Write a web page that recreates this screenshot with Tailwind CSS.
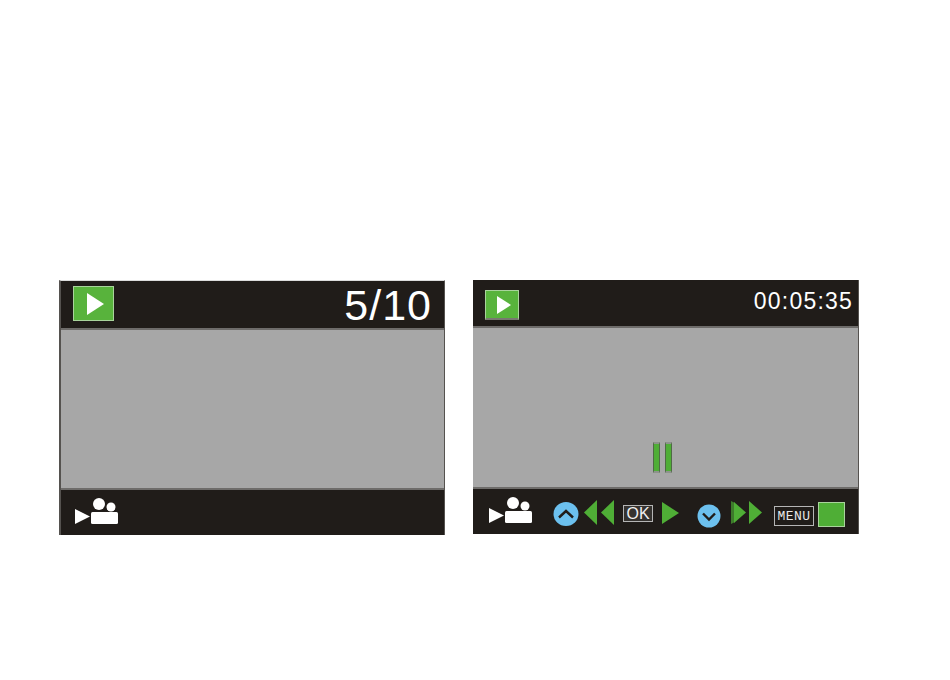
<!DOCTYPE html>
<html lang="en">
<head>
    <meta charset="UTF-8">
    <meta name="viewport" content="width=device-width, initial-scale=1.0">
    <script src="https://cdn.jsdelivr.net/npm/@tailwindcss/browser@4"></script>
    <title>Playback screens</title>
</head>
<body class="bg-white font-['Liberation_Sans',Arial,sans-serif]">
    <div class="w-[950px] h-[680px] flex items-start pl-[59px] pt-[280px] gap-[28px]">

        <!-- Photo playback -->
        <div class="w-[386px] h-[255px] flex flex-col bg-[#201c19] border-t border-t-[#dcdcdc] border-l-2 border-r border-l-[#55524f] border-r-[#55524f]">
            <div class="h-[49px] flex items-start justify-between pl-[12px] pr-[12px] shrink-0 border-b-2 border-[#6e6c6a]">
                <div class="w-[41px] h-[35px] mt-[5px] pl-[3px] flex items-center justify-center bg-[#58b33c] border border-[#a9d39c]">
                    <svg width="17" height="22" viewBox="0 0 17 22"><path d="M0 0L17 11L0 22Z" fill="#fff"/></svg>
                </div>
                <span class="text-[43px] leading-none tracking-[1px] text-white mt-[3px]">5/10</span>
            </div>
            <div class="h-[160px] bg-[#a7a7a7] shrink-0 border-b-2 border-[#6e6c6a]"></div>
            <div class="flex-1 flex items-start pl-[14px]">
                <svg class="mt-[8px]" width="44" height="27" viewBox="0 0 44 27">
                    <path d="M0 11L15 18.5L0 26Z" fill="#fff"/>
                    <circle cx="24" cy="6" r="6" fill="#fff"/>
                    <circle cx="36" cy="9" r="4.5" fill="#fff"/>
                    <rect x="16" y="14" width="27" height="12" rx="1.5" fill="#fff"/>
                </svg>
            </div>
        </div>

        <!-- Video playback -->
        <div class="w-[386px] h-[254px] flex flex-col bg-[#201c19] border-r border-[#55524f]">
            <div class="h-[48px] flex items-start justify-between pl-[12px] pr-[5px] shrink-0 border-b-2 border-[#6e6c6a]">
                <div class="w-[34px] h-[30px] mt-[10px] pl-[3px] flex items-center justify-center bg-[#58b33c] border border-[#a9d39c] border-b-2 border-b-[#77786f]">
                    <svg width="14" height="18" viewBox="0 0 14 18"><path d="M0 0L14 9L0 18Z" fill="#fff"/></svg>
                </div>
                <span class="text-[23px] leading-none tracking-[1.2px] text-white mt-[10px]">00:05:35</span>
            </div>
            <div class="h-[161px] bg-[#a7a7a7] shrink-0 border-b-2 border-[#6e6c6a] flex items-end justify-center pb-[14px] gap-[5px] pr-[6px]">
                <div class="w-[7px] h-[31px] bg-[#4fae36] border border-[#4f6b45] border-t-2 border-t-[#8e938c] border-b-2 border-b-[#8e938c]"></div>
                <div class="w-[7px] h-[31px] bg-[#4fae36] border border-[#4f6b45] border-t-2 border-t-[#8e938c] border-b-2 border-b-[#8e938c]"></div>
            </div>
            <div class="flex-1 flex items-start pl-[16px]">
                <svg class="shrink-0 mt-[8px]" width="44" height="27" viewBox="0 0 44 27">
                    <path d="M0 11L15 18.5L0 26Z" fill="#fff"/>
                    <circle cx="24" cy="6" r="6" fill="#fff"/>
                    <circle cx="36" cy="9" r="4.5" fill="#fff"/>
                    <rect x="16" y="14" width="27" height="12" rx="1.5" fill="#fff"/>
                </svg>
                <svg class="shrink-0 ml-[20px] mt-[13px]" width="26" height="24" viewBox="0 0 26 24">
                    <ellipse cx="13" cy="12" rx="12.5" ry="12" fill="#6cc0ee"/>
                    <path d="M6 15.5L13 9L20 15.5" fill="none" stroke="#201c19" stroke-width="2.4"/>
                </svg>
                <svg class="shrink-0 ml-[5px] mt-[11px]" width="30" height="25" viewBox="0 0 30 25">
                    <path d="M13 0V25L0 12.5Z" fill="#4fae36"/>
                    <path d="M30 0V25L17 12.5Z" fill="#4fae36"/>
                </svg>
                <div class="w-[30px] h-[17px] ml-[9px] mt-[16px] shrink-0 flex items-center justify-center border border-[#b5b5b5] bg-[#35322f] text-[#f0f0f0] text-[16px] leading-none">OK</div>
                <svg class="shrink-0 ml-[9px] mt-[13px]" width="17" height="22" viewBox="0 0 17 22"><path d="M0 0L17 11L0 22Z" fill="#4fae36"/></svg>
                <svg class="shrink-0 ml-[18px] mt-[15px]" width="24" height="24" viewBox="0 0 24 24">
                    <circle cx="12" cy="12" r="11.5" fill="#6cc0ee"/>
                    <path d="M6 9.5L12 15.5L18 9.5" fill="none" stroke="#201c19" stroke-width="2.4"/>
                </svg>
                <svg class="shrink-0 ml-[10px] mt-[12px]" width="31" height="23" viewBox="0 0 31 23">
                    <path d="M0 0L4 2V21L0 23Z" fill="#3d7a2b"/>
                    <path d="M3 1L15 11.5L3 22Z" fill="#4fae36"/>
                    <path d="M18 0L31 11.5L18 23Z" fill="#4fae36"/>
                </svg>
                <div class="w-[40px] h-[20px] ml-[12px] mt-[17px] shrink-0 flex items-center justify-center border border-[#b5b5b5] text-[#e8e8e8] text-[13px] leading-none tracking-[0.4px] font-['Liberation_Mono',monospace]">MENU</div>
                <div class="w-[27px] h-[25px] ml-[4px] mt-[13px] shrink-0 bg-[#4fae36] border border-[#a9d39c]"></div>
            </div>
        </div>
    </div>
</body>
</html>
